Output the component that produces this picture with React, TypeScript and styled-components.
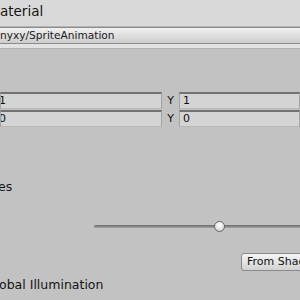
import React from "react";
import styled, { createGlobalStyle } from "styled-components";

const Global = createGlobalStyle`
  html, body { margin: 0; padding: 0; background: #c2c2c2; }
  body { font-family: "DejaVu Sans", Verdana, sans-serif; }
`;

const Frame = styled.div`
  width: 300px;
  height: 300px;
  overflow: hidden;
  background: #c2c2c2;
  display: flex;
  flex-direction: column;
  color: #141414;
`;

const Header = styled.div`
  height: 27px;
  box-sizing: border-box;
  background: #d9d9d9;
  box-shadow: inset 0 -1px 0 #b4b4b4;
  padding-top: 4px;
  font-size: 13.5px;
  line-height: 15px;
  white-space: nowrap;
`;

const ShaderBar = styled.div`
  height: 15px;
  border-top: 1px solid #8a8a8a;
  border-bottom: 1px solid #8c8c8c;
  background: linear-gradient(#f1f1f1, #e2e2e2 40%, #cdcdcd);
  font-size: 10.6px;
  line-height: 15px;
  white-space: nowrap;
  overflow: hidden;
  color: #1a1a1a;
`;

const Band = styled.div`
  height: 4px;
  background: #e2e2e2;
  border-bottom: 1px solid #b3b3b3;
`;

const Body = styled.div`
  display: flex;
  flex-direction: column;
  padding-top: 43px;
`;

const VectorRows = styled.div`
  display: flex;
  flex-direction: column;
  gap: 1px;
`;

const VectorRow = styled.div`
  display: grid;
  grid-template-columns: 162px 17px 1fr;
  height: 17px;
`;

const Field = styled.div<{ $pad: number }>`
  box-sizing: border-box;
  height: 17px;
  background: #d4d4d4;
  border: 1px solid #a3a3a3;
  border-top: 2px solid #727272;
  border-bottom-color: #b8b8b8;
  font-size: 11px;
  line-height: 14px;
  text-indent: ${(p) => p.$pad}px;
  white-space: nowrap;
  overflow: hidden;
  color: #111;
`;

const Axis = styled.div`
  font-size: 11px;
  line-height: 17px;
  text-align: center;
  color: #111;
`;

const Heading = styled.div<{ $indent: number; $top: number }>`
  font-size: 12.5px;
  line-height: 15px;
  margin-top: ${(p) => p.$top}px;
  text-indent: ${(p) => p.$indent}px;
  white-space: nowrap;
  color: #141414;
`;

const SliderRow = styled.div`
  height: 11px;
  margin-top: 27px;
  padding-left: 94px;
  display: flex;
  align-items: center;
`;

const Track = styled.div`
  position: relative;
  flex: 1;
  height: 3px;
  background: linear-gradient(#6c6c6c, #8a8a8a 60%, #a8a8a8);
  border-radius: 2px 0 0 2px;
`;

const Thumb = styled.div`
  position: absolute;
  top: -4px;
  width: 11px;
  height: 11px;
  box-sizing: border-box;
  border-radius: 50%;
  border: 1px solid #6a6a6a;
  background: radial-gradient(circle at 50% 35%, #ffffff, #e6e6e6 50%, #b9b9b9);
`;

const ButtonRow = styled.div`
  margin-top: 21px;
  padding-left: 241px;
  display: flex;
`;

const Button = styled.div`
  flex: none;
  width: 90px;
  height: 18px;
  box-sizing: border-box;
  border: 1px solid #8a8a8a;
  border-radius: 3px;
  background: linear-gradient(#f4f4f4, #e4e4e4 50%, #d2d2d2);
  font-size: 11px;
  line-height: 16px;
  padding-left: 5px;
  white-space: nowrap;
  color: #111;
`;

export default function App() {
  return (
    <Frame>
      <Global />
      <Header>aterial</Header>
      <ShaderBar>nyxy/SpriteAnimation</ShaderBar>
      <Band />
      <Body>
        <VectorRows>
          <VectorRow>
            <Field $pad={-2}>1</Field>
            <Axis>Y</Axis>
            <Field $pad={3}>1</Field>
          </VectorRow>
          <VectorRow>
            <Field $pad={-2}>0</Field>
            <Axis>Y</Axis>
            <Field $pad={3}>0</Field>
          </VectorRow>
        </VectorRows>
        <Heading $indent={-2} $top={52}>es</Heading>
        <SliderRow>
          <Track>
            <Thumb style={{ left: 120 }} />
          </Track>
        </SliderRow>
        <ButtonRow>
          <Button>From Shader</Button>
        </ButtonRow>
        <Heading $indent={-1} $top={6}>obal Illumination</Heading>
      </Body>
    </Frame>
  );
}
